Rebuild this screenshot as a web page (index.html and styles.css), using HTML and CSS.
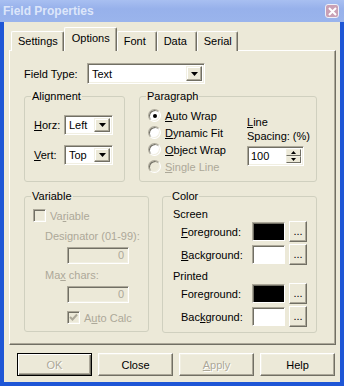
FILE: index.html
```html
<!DOCTYPE html>
<html lang="en">
<head>
    <meta charset="UTF-8">
    <title>Field Properties</title>
    <link rel="stylesheet" href="styles.css">
</head>
<body>
    <div class="window">
        <div class="titlebar">
            <span class="title">Field Properties</span>
            <span class="close">
                <svg width="9" height="9" viewBox="0 0 9 9"><path d="M1 1 L8 8 M8 1 L1 8" stroke="#fff" stroke-width="2"/></svg>
            </span>
        </div>

        <div class="frame">
            <div class="tabs">
                <div class="tab">Settings</div>
                <div class="tab active">Options</div>
                <div class="tab">Font</div>
                <div class="tab">Data</div>
                <div class="tab">Serial</div>
            </div>

            <div class="panel">
                <!-- Tipo de campo -->
                <div class="field-row">
                    <label class="field-label">Field Type:</label>
                    <div class="combo combo-wide">
                        <span class="value">Text</span>
                        <span class="drop"><svg width="7" height="4" viewBox="0 0 7 4"><path d="M0 0 H7 L3.5 4 Z" fill="#000"/></svg></span>
                    </div>
                </div>

                <div class="groups first">
                    <fieldset class="group align">
                        <legend>Alignment</legend>
                        <div class="align-row">
                            <label class="align-label"><u>H</u>orz:</label>
                            <div class="combo combo-small">
                                <span class="value">Left</span>
                                <span class="drop"><svg width="7" height="4" viewBox="0 0 7 4"><path d="M0 0 H7 L3.5 4 Z" fill="#000"/></svg></span>
                            </div>
                        </div>
                        <div class="align-row">
                            <label class="align-label"><u>V</u>ert:</label>
                            <div class="combo combo-small">
                                <span class="value">Top</span>
                                <span class="drop"><svg width="7" height="4" viewBox="0 0 7 4"><path d="M0 0 H7 L3.5 4 Z" fill="#000"/></svg></span>
                            </div>
                        </div>
                    </fieldset>

                    <fieldset class="group para">
                        <legend>Paragraph</legend>
                        <div class="para-body">
                            <div class="radios">
                                <div class="option"><span class="radio checked"></span><span><u>A</u>uto Wrap</span></div>
                                <div class="option"><span class="radio"></span><span><u>D</u>ynamic Fit</span></div>
                                <div class="option"><span class="radio"></span><span><u>O</u>bject Wrap</span></div>
                                <div class="option disabled"><span class="radio"></span><span><u>S</u>ingle Line</span></div>
                            </div>
                            <div class="spacing">
                                <div class="spacing-label"><u>L</u>ine<br>Spacing: (%)</div>
                                <div class="spin">
                                    <span class="value">100</span>
                                    <span class="spin-btns">
                                        <span class="spin-btn"><svg width="5" height="3" viewBox="0 0 5 3"><path d="M2.5 0 L5 3 H0 Z" fill="#000"/></svg></span>
                                        <span class="spin-btn"><svg width="5" height="3" viewBox="0 0 5 3"><path d="M0 0 H5 L2.5 3 Z" fill="#000"/></svg></span>
                                    </span>
                                </div>
                            </div>
                        </div>
                    </fieldset>
                </div>

                <div class="groups second">
                    <fieldset class="group variable disabled">
                        <legend>Variable</legend>
                        <div class="option"><span class="check"></span><span>Va<u>r</u>iable</span></div>
                        <div class="sub-label">Designator (01-99):</div>
                        <div class="num-input">0</div>
                        <div class="sub-label max">Ma<u>x</u> chars:</div>
                        <div class="num-input">0</div>
                        <div class="option auto-calc">
                            <span class="check">
                                <svg width="9" height="9" viewBox="0 0 9 9"><path d="M1 4 L3.5 6.5 L8 1.5" fill="none" stroke="#ACA899" stroke-width="2"/></svg>
                            </span>
                            <span>A<u>u</u>to Calc</span>
                        </div>
                    </fieldset>

                    <fieldset class="group color">
                        <legend>Color</legend>
                        <div class="color-head">Screen</div>
                        <div class="color-row">
                            <span class="color-label"><u>F</u>oreground:</span>
                            <span class="swatch black"></span>
                            <span class="dots">...</span>
                        </div>
                        <div class="color-row">
                            <span class="color-label"><u>B</u>ackground:</span>
                            <span class="swatch"></span>
                            <span class="dots">...</span>
                        </div>
                        <div class="color-head printed">Printed</div>
                        <div class="color-row">
                            <span class="color-label">Fore<u>g</u>round:</span>
                            <span class="swatch black"></span>
                            <span class="dots">...</span>
                        </div>
                        <div class="color-row">
                            <span class="color-label">Bac<u>k</u>ground:</span>
                            <span class="swatch"></span>
                            <span class="dots">...</span>
                        </div>
                    </fieldset>
                </div>
            </div>

            <div class="buttons">
                <button class="btn default" disabled>OK</button>
                <button class="btn">Close</button>
                <button class="btn" disabled><u>A</u>pply</button>
                <button class="btn">Help</button>
            </div>
        </div>
    </div>
</body>
</html>
```

FILE: styles.css
```css
/* Estilo geral */
* {
    box-sizing: border-box;
}

body {
    margin: 0;
    font-family: 'Liberation Sans', Arial, sans-serif;
    font-size: 11px;
    color: #000;
    background: #fff;
}

u {
    text-decoration: underline;
    text-underline-offset: 1px;
}

.window {
    width: 344px;
    height: 386px;
    display: flex;
    flex-direction: column;
}

/* Barra de titulo (inativa) */
.titlebar {
    height: 22px;
    display: flex;
    align-items: center;
    justify-content: space-between;
    padding: 0 5px 0 3px;
    background: linear-gradient(#A8BFF1, #97B1EB 40%, #9AB4EC);
    color: #DDE6FA;
    font-weight: bold;
    font-size: 12px;
}

.close {
    width: 14px;
    height: 14px;
    border: 1px solid #EEF0F8;
    border-radius: 3px;
    background: #C9A0B5;
    display: flex;
    align-items: center;
    justify-content: center;
}

.frame {
    flex: 1;
    background: #ECE9D8;
    border: 4px solid #1E56D6;
    border-top: 0;
    padding: 6px 4px 0 5px;
}

/* Abas */
.tabs {
    display: flex;
    align-items: flex-end;
    height: 23px;
    padding-left: 2px;
    position: relative;
    z-index: 1;
    margin-bottom: -1px;
}

.tab {
    height: 20px;
    min-width: 40px;
    padding: 0 5px 0 6px;
    line-height: 19px;
    border: 1px solid;
    border-color: #fff #716F64 transparent #fff;
    border-bottom: 0;
    border-radius: 2px 2px 0 0;
    box-shadow: inset -1px 0 #ACA899;
    background: #ECE9D8;
}

.tab.active {
    height: 24px;
    padding: 0 6px 0 7px;
    line-height: 21px;
}

.panel {
    height: 295px;
    border: 1px solid;
    border-color: #fff #716F64 #716F64 #fff;
    box-shadow: inset -1px -1px #ACA899;
    padding: 12px 0 0 14px;
}

/* Campos */
.field-row {
    display: flex;
    align-items: center;
    height: 21px;
}

.field-label {
    width: 63px;
}

.combo {
    display: flex;
    align-items: center;
    height: 21px;
    padding: 2px;
    background: #fff;
    border: 1px solid;
    border-color: #ACA899 #fff #fff #ACA899;
    box-shadow: inset 1px 1px #716F64, inset -1px -1px #F1EFE2;
}

.combo-wide {
    width: 118px;
}

.combo-small {
    width: 49px;
    height: 20px;
}

.combo .value {
    flex: 1;
    padding-left: 2px;
}

.drop {
    width: 16px;
    height: 100%;
    display: flex;
    align-items: center;
    justify-content: center;
    background: #ECE9D8;
    border: 1px solid;
    border-color: #F1EFE2 #716F64 #716F64 #F1EFE2;
    box-shadow: inset -1px -1px #ACA899, inset 1px 1px #fff;
}

/* Grupos */
.groups {
    display: flex;
    gap: 14px;
}

.groups.first {
    margin-top: 6px;
}

.groups.second {
    margin-top: 8px;
    gap: 13px;
}

.group {
    margin: 0;
    border: 1px solid #D0D0BF;
    border-radius: 3px;
    min-width: 0;
}

.group legend {
    padding: 0 1px;
    margin-left: -2px;
    line-height: 13px;
}

.align {
    width: 101px;
    height: 92px;
    padding: 12px 0 0 9px;
}

.align legend {
    margin-left: -3px;
}

.align-row {
    display: flex;
    align-items: center;
    height: 20px;
    margin-bottom: 10px;
}

.align-label {
    width: 30px;
}

.para {
    width: 178px;
    height: 92px;
    padding: 4px 0 0 8px;
}

.para-body {
    display: flex;
}

.radios {
    width: 99px;
}

.option {
    display: flex;
    align-items: center;
    height: 17px;
    gap: 4px;
}

.option.disabled,
.disabled .option,
.disabled .sub-label {
    color: #ACA899;
}

.radio {
    width: 13px;
    height: 13px;
    border-radius: 50%;
    border: 1px solid;
    border-color: #ACA899 #fff #fff #ACA899;
    box-shadow: inset 1px 1px #716F64, inset -1px -1px #F1EFE2;
    background: #fff;
    display: flex;
    align-items: center;
    justify-content: center;
}

.radio.checked::after {
    content: '';
    width: 4px;
    height: 4px;
    border-radius: 50%;
    background: #000;
}

.option.disabled .radio {
    background: #ECE9D8;
}

.spacing {
    padding-top: 8px;
}

.spacing-label {
    line-height: 14px;
}

.spin {
    display: flex;
    align-items: center;
    width: 57px;
    height: 20px;
    margin-top: 3px;
    padding: 2px;
    background: #fff;
    border: 1px solid;
    border-color: #ACA899 #fff #fff #ACA899;
    box-shadow: inset 1px 1px #716F64, inset -1px -1px #F1EFE2;
}

.spin .value {
    flex: 1;
    padding-left: 1px;
}

.spin-btns {
    display: flex;
    flex-direction: column;
    width: 15px;
    height: 100%;
}

.spin-btn {
    flex: 1;
    display: flex;
    align-items: center;
    justify-content: center;
    background: #ECE9D8;
    border: 1px solid;
    border-color: #F1EFE2 #716F64 #716F64 #F1EFE2;
}

/* Variavel */
.variable {
    width: 125px;
    height: 142px;
    padding: 4px 0 0 8px;
}

.check {
    width: 13px;
    height: 13px;
    border: 1px solid;
    border-color: #ACA899 #fff #fff #ACA899;
    box-shadow: inset 1px 1px #716F64, inset -1px -1px #F1EFE2;
    background: #ECE9D8;
    display: flex;
    align-items: center;
    justify-content: center;
}

.sub-label {
    margin: 6px 0 0 12px;
    line-height: 13px;
}

.sub-label.max {
    margin-top: 5px;
}

.num-input {
    width: 62px;
    height: 17px;
    margin: 4px 0 0 34px;
    padding-right: 4px;
    text-align: right;
    line-height: 15px;
    color: #ACA899;
    border: 1px solid;
    border-color: #ACA899 #fff #fff #ACA899;
    box-shadow: inset 1px 1px #716F64, inset -1px -1px #F1EFE2;
}

.auto-calc {
    margin: 6px 0 0 34px;
}

/* Cor */
.color {
    width: 155px;
    height: 143px;
    padding: 5px 0 0 10px;
}

.color-head {
    line-height: 13px;
}

.color-head.printed {
    margin-top: 5px;
}

.color-row {
    display: flex;
    align-items: center;
    height: 21px;
    margin-bottom: 2px;
    padding-left: 8px;
}

.color-label {
    width: 71px;
}

.swatch {
    width: 33px;
    height: 19px;
    background: #fff;
    border: 1px solid;
    border-color: #ACA899 #fff #fff #ACA899;
    box-shadow: inset 1px 1px #716F64;
}

.swatch.black {
    background: #000;
}

.dots {
    width: 18px;
    height: 21px;
    margin-left: 4px;
    display: flex;
    align-items: flex-end;
    justify-content: center;
    padding-bottom: 4px;
    border: 1px solid;
    border-color: #fff #716F64 #716F64 #fff;
    box-shadow: inset -1px -1px #ACA899;
}

/* Botoes */
.buttons {
    display: flex;
    gap: 6px;
    margin-top: 8px;
    padding-left: 8px;
}

.btn {
    width: 75px;
    height: 23px;
    font-family: inherit;
    font-size: 11px;
    color: #000;
    background: #ECE9D8;
    border: 1px solid;
    border-color: #fff #716F64 #716F64 #fff;
    box-shadow: inset -1px -1px #ACA899, inset 1px 1px #F1EFE2;
    padding: 0;
}

.btn:disabled {
    color: #ACA899;
    text-shadow: 1px 1px #fff;
}

.btn.default {
    border: 1px solid #000;
    box-shadow: inset 1px 1px #fff, inset -1px -1px #716F64, inset -2px -2px #ACA899;
}
```
